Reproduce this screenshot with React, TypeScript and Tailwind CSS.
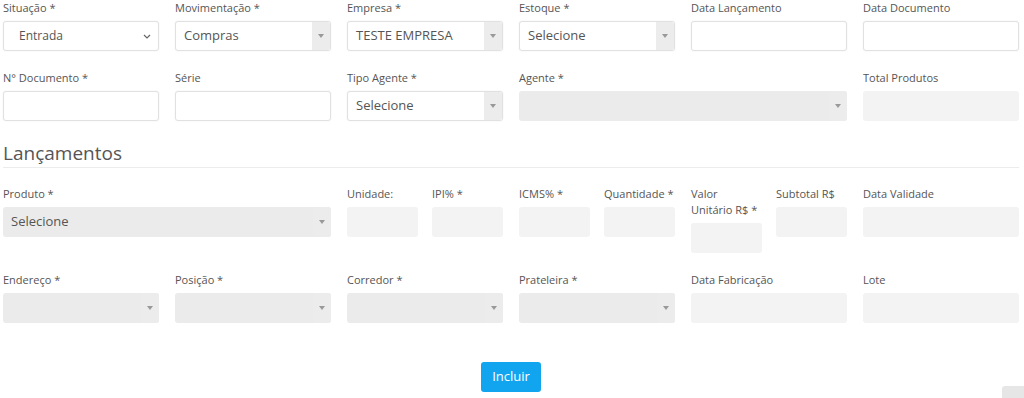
import React from "react";

const font = { fontFamily: '"Open Sans", "Liberation Sans", sans-serif' };

function Label({ children }: { children: React.ReactNode }) {
  return <div className="text-[11px] leading-[16px] text-[#555] mb-[5px]">{children}</div>;
}

function Arrow() {
  return (
    <div className="w-[18px] self-stretch flex items-center justify-center bg-[#ececec] rounded-r-[3px]">
      <div className="w-0 h-0 border-l-[3px] border-r-[3px] border-t-[4px] border-l-transparent border-r-transparent border-t-[#999]" />
    </div>
  );
}

function Select2({ text, disabled }: { text?: string; disabled?: boolean }) {
  return (
    <div
      className={`h-[30px] rounded-[3px] flex items-stretch ${
        disabled ? "bg-[#ebebeb]" : "bg-white border border-[#e1e1e1] shadow-[0_0_2px_rgba(0,0,0,0.07)]"
      }`}
    >
      <div className="flex-1 flex items-center pl-[8px] text-[13px] text-[#555]">{text}</div>
      <Arrow />
    </div>
  );
}

function NativeSelect({ text }: { text: string }) {
  return (
    <div className="h-[30px] rounded-[3px] bg-white border border-[#e1e1e1] shadow-[0_0_2px_rgba(0,0,0,0.07)] flex items-center pl-[15px] pr-[7px]">
      <span className="flex-1 text-[12px] text-[#555]">{text}</span>
      <svg width="8" height="5" viewBox="0 0 8 5" fill="none">
        <polyline points="1,1 4,4 7,1" stroke="#666" strokeWidth="1.2" />
      </svg>
    </div>
  );
}

function Input() {
  return <div className="h-[30px] rounded-[3px] bg-white border border-[#e1e1e1] shadow-[0_0_2px_rgba(0,0,0,0.07)]" />;
}

function Grey() {
  return <div className="h-[30px] rounded-[3px] bg-[#f3f3f3]" />;
}

function Field({ label, children }: { label: React.ReactNode; children: React.ReactNode }) {
  return (
    <div className="min-w-0">
      <Label>{label}</Label>
      {children}
    </div>
  );
}

export default function App() {
  return (
    <div className="relative w-[1024px] h-[398px] overflow-hidden bg-white" style={font}>
      <div className="ml-[3px] w-[1016px]">
        <div className="grid grid-cols-6 gap-x-4 gap-y-[19px] items-start">
          <Field label="Situação *">
            <NativeSelect text="Entrada" />
          </Field>
          <Field label="Movimentação *">
            <Select2 text="Compras" />
          </Field>
          <Field label="Empresa *">
            <Select2 text="TESTE EMPRESA" />
          </Field>
          <Field label="Estoque *">
            <Select2 text="Selecione" />
          </Field>
          <Field label="Data Lançamento">
            <Input />
          </Field>
          <Field label="Data Documento">
            <Input />
          </Field>

          <Field label="N° Documento *">
            <Input />
          </Field>
          <Field label="Série">
            <Input />
          </Field>
          <Field label="Tipo Agente *">
            <Select2 text="Selecione" />
          </Field>
          <div className="col-span-2">
            <Field label="Agente *">
              <Select2 disabled />
            </Field>
          </div>
          <Field label="Total Produtos">
            <Grey />
          </Field>
        </div>

        <h4 className="mt-[18px] text-[19px] leading-[28px] text-[#555] border-b border-[#ececec]">Lançamentos</h4>

        <div className="mt-[18px] grid grid-cols-6 gap-x-4 gap-y-[19px] items-start">
          <div className="col-span-2">
            <Field label="Produto *">
              <Select2 text="Selecione" disabled />
            </Field>
          </div>
          <div className="grid grid-cols-2 gap-x-[14px] items-start">
            <Field label="Unidade:">
              <Grey />
            </Field>
            <Field label="IPI% *">
              <Grey />
            </Field>
          </div>
          <div className="grid grid-cols-2 gap-x-[14px] items-start">
            <Field label="ICMS% *">
              <Grey />
            </Field>
            <Field label="Quantidade *">
              <Grey />
            </Field>
          </div>
          <div className="grid grid-cols-2 gap-x-[14px] items-start">
            <Field
              label={
                <>
                  Valor
                  <br />
                  Unitário R$ *
                </>
              }
            >
              <Grey />
            </Field>
            <Field label="Subtotal R$">
              <Grey />
            </Field>
          </div>
          <Field label="Data Validade">
            <Grey />
          </Field>

          <Field label="Endereço *">
            <Select2 disabled />
          </Field>
          <Field label="Posição *">
            <Select2 disabled />
          </Field>
          <Field label="Corredor *">
            <Select2 disabled />
          </Field>
          <Field label="Prateleira *">
            <Select2 disabled />
          </Field>
          <Field label="Data Fabricação">
            <Grey />
          </Field>
          <Field label="Lote">
            <Grey />
          </Field>
        </div>

        <div className="mt-[39px] flex justify-center">
          <button className="h-[30px] px-[11px] rounded-[3px] bg-[#12a5ef] text-white text-[13px]">Incluir</button>
        </div>
      </div>
      <div className="absolute left-[1002px] top-[386px] w-[30px] h-[30px] rounded-[3px] bg-[#e6e6e6]" />
    </div>
  );
}
